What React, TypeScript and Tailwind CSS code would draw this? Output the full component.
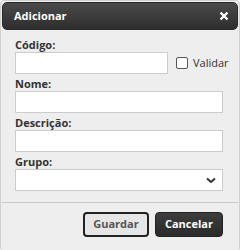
import { useState } from "react";

const labelCls = "mt-[2px] block h-[15px] text-[11px] font-bold leading-[15px] text-[#333]";
const inputCls = "block h-[22px] w-full border border-[#ccc] bg-white px-1 text-[11px] outline-none";

const App = () => {
    const [validar, setValidar] = useState(false);

    return (
        <div className="h-[250px] w-[241px] overflow-hidden bg-white font-['Open_Sans',sans-serif]">
            <div className="h-[252px] w-[240px] rounded-[4px] border border-[#d0d0d0] bg-[#eee] p-[1px]">
                <div className="flex h-[28px] items-center justify-between rounded-[5px] border border-[#2a2a2a] bg-gradient-to-b from-[#4a4a4a] to-[#2e2e2e] pl-[11px] pr-[6px]">
                    <span className="text-[11px] font-bold text-white">Adicionar</span>
                    <svg width="10" height="10" viewBox="0 0 10 10" className="mr-[2px]">
                        <path d="M1.5 1.5 L8.5 8.5 M8.5 1.5 L1.5 8.5" stroke="#fff" strokeWidth="2.4" />
                    </svg>
                </div>

                <div className="flex flex-col pl-[13px] pr-[15px] pt-[5px]">
                    <label className={labelCls}>Código:</label>
                    <div className="flex items-center">
                        <input className={`${inputCls} !w-[153px] shrink-0`} />
                        <input
                            type="checkbox"
                            checked={validar}
                            onChange={(e) => setValidar(e.target.checked)}
                            className="ml-[8px] h-[12px] w-[12px] shrink-0 appearance-none rounded-[2px] border border-[#555] bg-white"
                        />
                        <span className="ml-[5px] text-[11px] text-[#333]">Validar</span>
                    </div>

                    <label className={labelCls}>Nome:</label>
                    <input className={inputCls} />

                    <label className={labelCls}>Descrição:</label>
                    <input className={inputCls} />

                    <label className={labelCls}>Grupo:</label>
                    <div className="relative">
                        <select className={`${inputCls} appearance-none`}></select>
                        <svg width="10" height="7" viewBox="0 0 10 7" className="pointer-events-none absolute right-[7px] top-[8px]">
                            <path d="M1 1.5 L5 5 L9 1.5" stroke="#333" strokeWidth="2" fill="none" />
                        </svg>
                    </div>
                </div>

                <div className="mt-[11px] border-t border-[#c8c8c8]" />

                <div className="flex justify-end gap-[6px] pr-[15px] pt-[9px]">
                    <button className="h-[25px] w-[66px] rounded-[4px] border-2 border-[#222] bg-[#e6e6e6] text-[11px] font-bold text-[#555]">
                        Guardar
                    </button>
                    <button className="h-[25px] w-[68px] rounded-[4px] border border-[#222] bg-gradient-to-b from-[#3d3d3d] to-[#2a2a2a] text-[11px] font-bold text-white">
                        Cancelar
                    </button>
                </div>
            </div>
        </div>
    );
};

export default App;
